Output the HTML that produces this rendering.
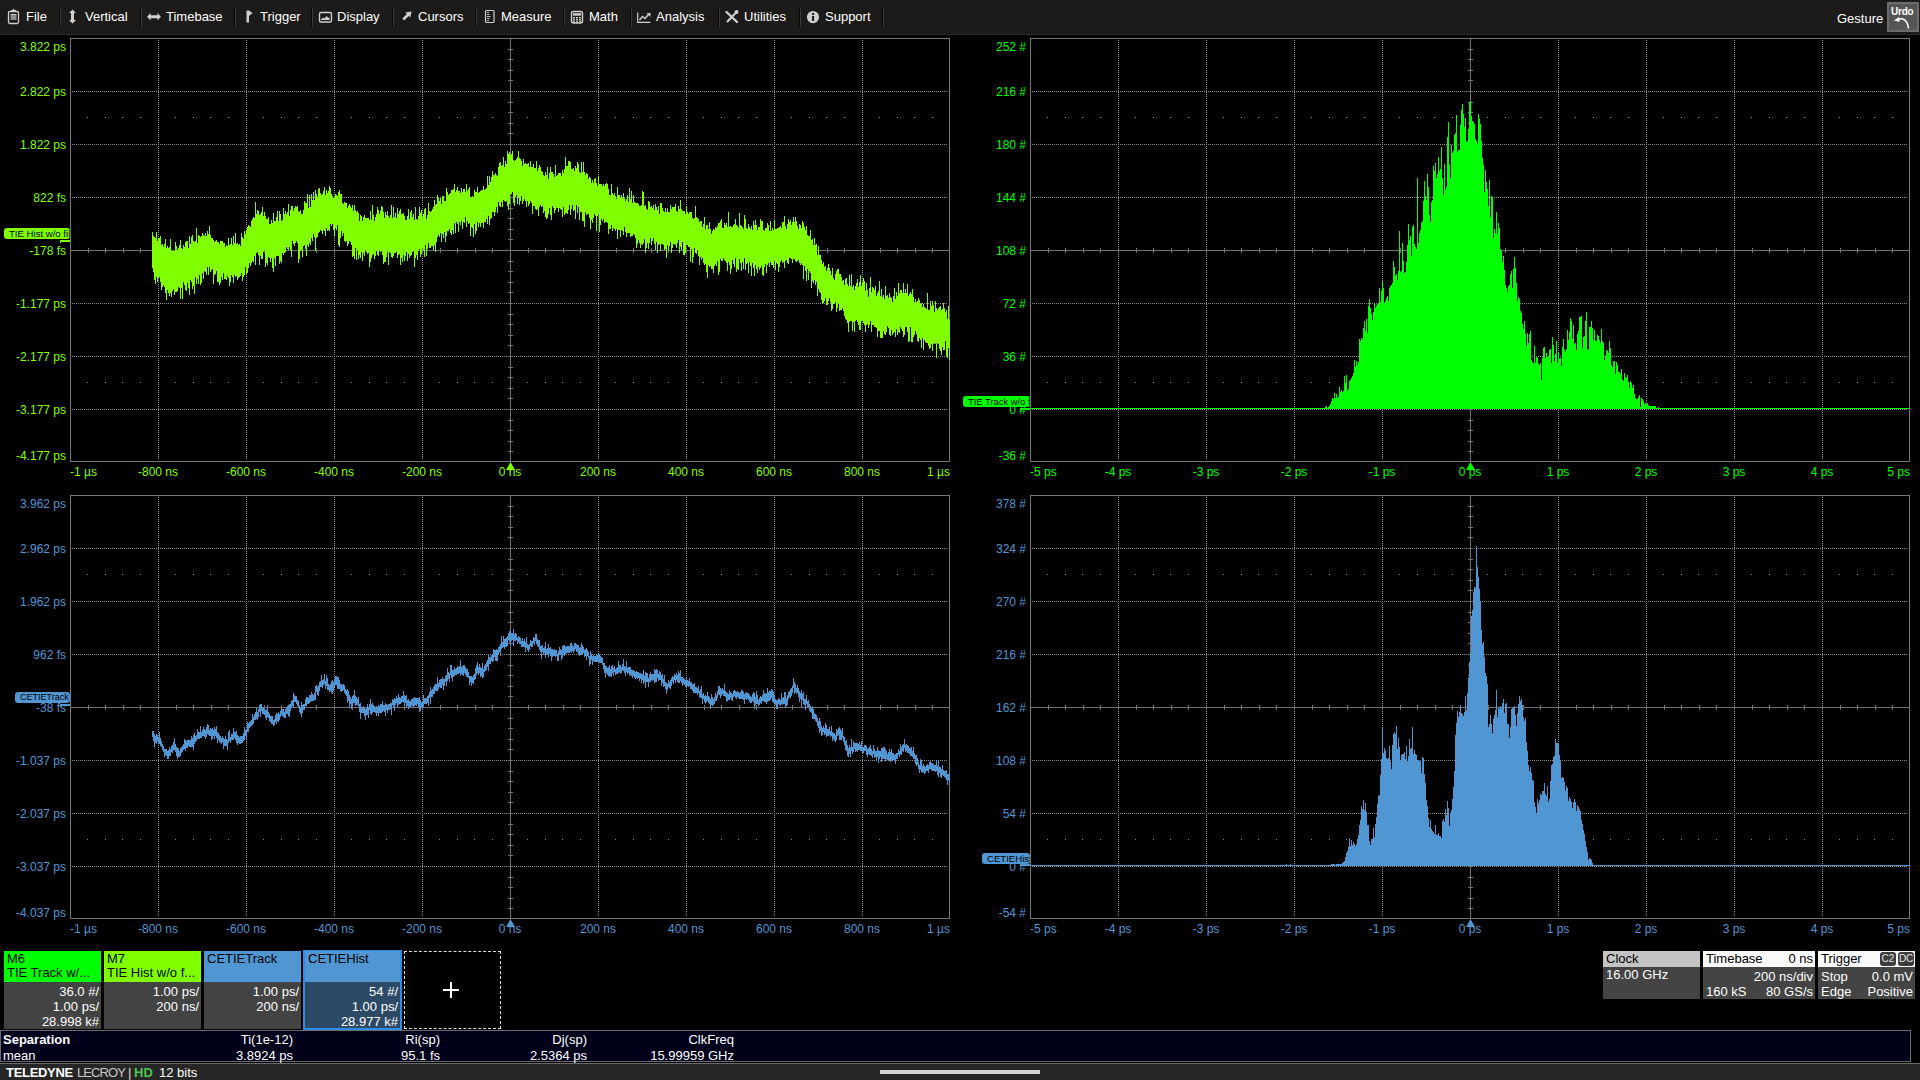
<!DOCTYPE html><html><head><meta charset="utf-8"><style>
*{margin:0;padding:0;box-sizing:border-box}
html,body{width:1920px;height:1080px;overflow:hidden;background:#000;font-family:"Liberation Sans",sans-serif;color:#fff}
.a{position:absolute;white-space:nowrap}
#menu{position:absolute;left:0;top:0;width:1920px;height:35px;background:#1c1b19;border-bottom:1px solid #1c2c3c}
.mi{position:absolute;top:9px;font-size:13px;line-height:15px;color:#fff}
.sep{position:absolute;top:8px;width:2px;height:19px;background:#080808;border-right:1px solid #3a3a3a}
.yl{position:absolute;font-size:12px;line-height:14px;text-align:right;width:70px}
.xl{position:absolute;font-size:12px;line-height:14px;text-align:center;width:80px}
.mk{position:absolute;white-space:nowrap;height:11px;border-radius:3px;color:#000;font-size:9px;line-height:11px;overflow:hidden;text-align:left;padding-left:5px}
.box{position:absolute;font-size:13px;line-height:15px}
.hd{position:absolute;left:0;top:0;right:0;color:#000;padding:1px 0 0 3px;line-height:14px}
.bd{position:absolute;left:0;right:0;bottom:0;background:#434343;text-align:right;padding:2px 2px 0 0}
</style></head><body>
<div id="menu">
<div class="mi" style="left:26px">File</div>
<div class="sep" style="left:59px"></div>
<div class="mi" style="left:85px">Vertical</div>
<div class="sep" style="left:140px"></div>
<div class="mi" style="left:166px">Timebase</div>
<div class="sep" style="left:234px"></div>
<div class="mi" style="left:260px">Trigger</div>
<div class="sep" style="left:311px"></div>
<div class="mi" style="left:337px">Display</div>
<div class="sep" style="left:392px"></div>
<div class="mi" style="left:418px">Cursors</div>
<div class="sep" style="left:475px"></div>
<div class="mi" style="left:501px">Measure</div>
<div class="sep" style="left:563px"></div>
<div class="mi" style="left:589px">Math</div>
<div class="sep" style="left:630px"></div>
<div class="mi" style="left:656px">Analysis</div>
<div class="sep" style="left:718px"></div>
<div class="mi" style="left:744px">Utilities</div>
<div class="sep" style="left:799px"></div>
<div class="mi" style="left:825px">Support</div>
<div class="sep" style="left:882px"></div>
<div class="mi" style="left:1837px;top:11px">Gesture</div>
</div>
<svg class="a" style="left:0;top:0" width="960" height="34"><rect x="8.5" y="11.5" width="10" height="12" rx="1.5" fill="none" stroke="#cfcfcf" stroke-width="1.3"/><rect x="10.5" y="15" width="6" height="5" fill="#8a8a8a"/><rect x="10.5" y="14" width="6" height="1" fill="#cfcfcf"/><path d="M11 12V10h1.5l1-1.5l1 1.5H16v2z" fill="#cfcfcf"/><path d="M72.5 9.5l3.5 3.5h-2v7h2l-3.5 3.5l-3.5-3.5h2v-7h-2z" fill="#cfcfcf"/><path d="M147 16.8l3.6-3.8v2.3h6.8v-2.3l3.6 3.8l-3.6 3.8v-2.3h-6.8v2.3z" fill="#cfcfcf"/><path d="M246.5 10.5h2.5l3.5 2.5l-3.5 3v6.5h-2.5z" fill="#cfcfcf"/><rect x="319.5" y="12.5" width="12" height="9.5" rx="1.5" fill="none" stroke="#cfcfcf" stroke-width="1.4"/><path d="M321 19.5l2-2l1.5 1l2-2.5l2 2l1 -1v3h-8.5z" fill="#cfcfcf"/><path d="M411.5 11.5l-1.2 6l-1.6-1.6l-4.5 4.5l-1.8-1.8l4.5-4.5l-1.6-1.6z" fill="#cfcfcf"/><rect x="485.5" y="10.5" width="8.5" height="12" rx="1" fill="none" stroke="#cfcfcf" stroke-width="1.2"/><path d="M487 12.5h2M487 14.5h2.5M487 16.5h3.5M487 18.5h2.5M487 20.5h2" stroke="#cfcfcf" stroke-width="0.9"/><rect x="571.5" y="11.5" width="11" height="11.5" rx="2" fill="none" stroke="#cfcfcf" stroke-width="1.4"/><rect x="573" y="13.2" width="8" height="2.5" fill="#cfcfcf"/><rect x="573.0" y="17.0" width="2" height="1.4" fill="#cfcfcf"/><rect x="576.0" y="17.0" width="2" height="1.4" fill="#cfcfcf"/><rect x="579.0" y="17.0" width="2" height="1.4" fill="#cfcfcf"/><rect x="573.0" y="19.1" width="2" height="1.4" fill="#cfcfcf"/><rect x="576.0" y="19.1" width="2" height="1.4" fill="#cfcfcf"/><rect x="579.0" y="19.1" width="2" height="1.4" fill="#cfcfcf"/><rect x="573.0" y="21.2" width="2" height="1.4" fill="#cfcfcf"/><rect x="576.0" y="21.2" width="2" height="1.4" fill="#cfcfcf"/><rect x="579.0" y="21.2" width="2" height="1.4" fill="#cfcfcf"/><path d="M637.7 12.5V22.3H650.5" fill="none" stroke="#cfcfcf" stroke-width="1.2"/><path d="M639.5 20l3-3.5l2.5 2l3.5-4" fill="none" stroke="#cfcfcf" stroke-width="1.4"/><path d="M646.5 13h4v4z" fill="#cfcfcf"/><path d="M726.5 12l10.5 10" stroke="#cfcfcf" stroke-width="2.4" stroke-linecap="round"/><path d="M737 11.5l-9.5 10" stroke="#cfcfcf" stroke-width="2" stroke-linecap="round"/><circle cx="736.5" cy="12" r="2" fill="#cfcfcf"/><circle cx="813" cy="17.1" r="6.1" fill="#cfcfcf"/><rect x="812" y="16" width="2.1" height="5" fill="#1b1b1b"/><rect x="812" y="13" width="2.1" height="2" fill="#1b1b1b"/></svg>
<div class="a" style="left:1887px;top:2px;width:32px;height:30px;background:#555;border:2px solid #6c6c6c"></div>
<div class="a" style="left:1891px;top:6px;font-size:10px;line-height:12px;color:#fff;font-weight:bold;letter-spacing:-0.2px">Urdo</div>
<svg class="a" style="left:1887px;top:2px" width="32" height="30"><path d="M10.5 17.5c5-2 10 0 11 9" fill="none" stroke="#fff" stroke-width="1.6"/><path d="M7 18.5l5-3.5l0.5 5z" fill="#fff"/></svg>
<svg class="a" style="left:0;top:0" width="1920" height="1080" shape-rendering="crispEdges">
<path d="M158.5 40V460M246.5 40V460M334.5 40V460M422.5 40V460M598.5 40V460M686.5 40V460M774.5 40V460M862.5 40V460" stroke="#8c8c8c" stroke-width="1" stroke-dasharray="1 1" fill="none"/>
<path d="M72 91.5H948M72 144.5H948M72 197.5H948M72 303.5H948M72 356.5H948M72 409.5H948" stroke="#8c8c8c" stroke-width="1" stroke-dasharray="1 1" fill="none"/>
<path d="M87 117h1v1h-1zM105 117h1v1h-1zM122 117h1v1h-1zM140 117h1v1h-1zM175 117h1v1h-1zM193 117h1v1h-1zM210 117h1v1h-1zM228 117h1v1h-1zM263 117h1v1h-1zM281 117h1v1h-1zM298 117h1v1h-1zM316 117h1v1h-1zM351 117h1v1h-1zM369 117h1v1h-1zM386 117h1v1h-1zM404 117h1v1h-1zM439 117h1v1h-1zM457 117h1v1h-1zM474 117h1v1h-1zM492 117h1v1h-1zM527 117h1v1h-1zM545 117h1v1h-1zM562 117h1v1h-1zM580 117h1v1h-1zM615 117h1v1h-1zM633 117h1v1h-1zM650 117h1v1h-1zM668 117h1v1h-1zM703 117h1v1h-1zM721 117h1v1h-1zM738 117h1v1h-1zM756 117h1v1h-1zM791 117h1v1h-1zM809 117h1v1h-1zM826 117h1v1h-1zM844 117h1v1h-1zM879 117h1v1h-1zM897 117h1v1h-1zM914 117h1v1h-1zM932 117h1v1h-1zM87 382h1v1h-1zM105 382h1v1h-1zM122 382h1v1h-1zM140 382h1v1h-1zM175 382h1v1h-1zM193 382h1v1h-1zM210 382h1v1h-1zM228 382h1v1h-1zM263 382h1v1h-1zM281 382h1v1h-1zM298 382h1v1h-1zM316 382h1v1h-1zM351 382h1v1h-1zM369 382h1v1h-1zM386 382h1v1h-1zM404 382h1v1h-1zM439 382h1v1h-1zM457 382h1v1h-1zM474 382h1v1h-1zM492 382h1v1h-1zM527 382h1v1h-1zM545 382h1v1h-1zM562 382h1v1h-1zM580 382h1v1h-1zM615 382h1v1h-1zM633 382h1v1h-1zM650 382h1v1h-1zM668 382h1v1h-1zM703 382h1v1h-1zM721 382h1v1h-1zM738 382h1v1h-1zM756 382h1v1h-1zM791 382h1v1h-1zM809 382h1v1h-1zM826 382h1v1h-1zM844 382h1v1h-1zM879 382h1v1h-1zM897 382h1v1h-1zM914 382h1v1h-1zM932 382h1v1h-1z" fill="#8c8c8c"/>
<path d="M71 250.5H949M510.5 39V461M88.5 248v5M105.5 248v5M123.5 248v5M140.5 248v5M158.5 248v5M176.5 248v5M193.5 248v5M211.5 248v5M228.5 248v5M246.5 248v5M264.5 248v5M281.5 248v5M299.5 248v5M316.5 248v5M334.5 248v5M352.5 248v5M369.5 248v5M387.5 248v5M404.5 248v5M422.5 248v5M440.5 248v5M457.5 248v5M475.5 248v5M492.5 248v5M510.5 248v5M528.5 248v5M545.5 248v5M563.5 248v5M580.5 248v5M598.5 248v5M616.5 248v5M633.5 248v5M651.5 248v5M668.5 248v5M686.5 248v5M704.5 248v5M721.5 248v5M739.5 248v5M756.5 248v5M774.5 248v5M792.5 248v5M809.5 248v5M827.5 248v5M844.5 248v5M862.5 248v5M880.5 248v5M897.5 248v5M915.5 248v5M932.5 248v5M508 49.5h5M508 59.5h5M508 70.5h5M508 80.5h5M508 91.5h5M508 102.5h5M508 112.5h5M508 123.5h5M508 133.5h5M508 144.5h5M508 155.5h5M508 165.5h5M508 176.5h5M508 186.5h5M508 197.5h5M508 208.5h5M508 218.5h5M508 229.5h5M508 239.5h5M508 250.5h5M508 261.5h5M508 271.5h5M508 282.5h5M508 292.5h5M508 303.5h5M508 314.5h5M508 324.5h5M508 335.5h5M508 345.5h5M508 356.5h5M508 367.5h5M508 377.5h5M508 388.5h5M508 398.5h5M508 409.5h5M508 420.5h5M508 430.5h5M508 441.5h5M508 451.5h5" stroke="#727272" stroke-width="1" fill="none"/>
<rect x="70.5" y="38.5" width="879" height="423" stroke="#767676" stroke-width="1" fill="none"/>
<path d="M1118.5 40V460M1206.5 40V460M1294.5 40V460M1382.5 40V460M1558.5 40V460M1646.5 40V460M1734.5 40V460M1822.5 40V460" stroke="#8c8c8c" stroke-width="1" stroke-dasharray="1 1" fill="none"/>
<path d="M1032 91.5H1908M1032 144.5H1908M1032 197.5H1908M1032 303.5H1908M1032 356.5H1908M1032 409.5H1908" stroke="#8c8c8c" stroke-width="1" stroke-dasharray="1 1" fill="none"/>
<path d="M1047 117h1v1h-1zM1065 117h1v1h-1zM1082 117h1v1h-1zM1100 117h1v1h-1zM1135 117h1v1h-1zM1153 117h1v1h-1zM1170 117h1v1h-1zM1188 117h1v1h-1zM1223 117h1v1h-1zM1241 117h1v1h-1zM1258 117h1v1h-1zM1276 117h1v1h-1zM1311 117h1v1h-1zM1329 117h1v1h-1zM1346 117h1v1h-1zM1364 117h1v1h-1zM1399 117h1v1h-1zM1417 117h1v1h-1zM1434 117h1v1h-1zM1452 117h1v1h-1zM1487 117h1v1h-1zM1505 117h1v1h-1zM1522 117h1v1h-1zM1540 117h1v1h-1zM1575 117h1v1h-1zM1593 117h1v1h-1zM1610 117h1v1h-1zM1628 117h1v1h-1zM1663 117h1v1h-1zM1681 117h1v1h-1zM1698 117h1v1h-1zM1716 117h1v1h-1zM1751 117h1v1h-1zM1769 117h1v1h-1zM1786 117h1v1h-1zM1804 117h1v1h-1zM1839 117h1v1h-1zM1857 117h1v1h-1zM1874 117h1v1h-1zM1892 117h1v1h-1zM1047 382h1v1h-1zM1065 382h1v1h-1zM1082 382h1v1h-1zM1100 382h1v1h-1zM1135 382h1v1h-1zM1153 382h1v1h-1zM1170 382h1v1h-1zM1188 382h1v1h-1zM1223 382h1v1h-1zM1241 382h1v1h-1zM1258 382h1v1h-1zM1276 382h1v1h-1zM1311 382h1v1h-1zM1329 382h1v1h-1zM1346 382h1v1h-1zM1364 382h1v1h-1zM1399 382h1v1h-1zM1417 382h1v1h-1zM1434 382h1v1h-1zM1452 382h1v1h-1zM1487 382h1v1h-1zM1505 382h1v1h-1zM1522 382h1v1h-1zM1540 382h1v1h-1zM1575 382h1v1h-1zM1593 382h1v1h-1zM1610 382h1v1h-1zM1628 382h1v1h-1zM1663 382h1v1h-1zM1681 382h1v1h-1zM1698 382h1v1h-1zM1716 382h1v1h-1zM1751 382h1v1h-1zM1769 382h1v1h-1zM1786 382h1v1h-1zM1804 382h1v1h-1zM1839 382h1v1h-1zM1857 382h1v1h-1zM1874 382h1v1h-1zM1892 382h1v1h-1z" fill="#8c8c8c"/>
<path d="M1031 250.5H1909M1470.5 39V461M1048.5 248v5M1065.5 248v5M1083.5 248v5M1100.5 248v5M1118.5 248v5M1136.5 248v5M1153.5 248v5M1171.5 248v5M1188.5 248v5M1206.5 248v5M1224.5 248v5M1241.5 248v5M1259.5 248v5M1276.5 248v5M1294.5 248v5M1312.5 248v5M1329.5 248v5M1347.5 248v5M1364.5 248v5M1382.5 248v5M1400.5 248v5M1417.5 248v5M1435.5 248v5M1452.5 248v5M1470.5 248v5M1488.5 248v5M1505.5 248v5M1523.5 248v5M1540.5 248v5M1558.5 248v5M1576.5 248v5M1593.5 248v5M1611.5 248v5M1628.5 248v5M1646.5 248v5M1664.5 248v5M1681.5 248v5M1699.5 248v5M1716.5 248v5M1734.5 248v5M1752.5 248v5M1769.5 248v5M1787.5 248v5M1804.5 248v5M1822.5 248v5M1840.5 248v5M1857.5 248v5M1875.5 248v5M1892.5 248v5M1468 49.5h5M1468 59.5h5M1468 70.5h5M1468 80.5h5M1468 91.5h5M1468 102.5h5M1468 112.5h5M1468 123.5h5M1468 133.5h5M1468 144.5h5M1468 155.5h5M1468 165.5h5M1468 176.5h5M1468 186.5h5M1468 197.5h5M1468 208.5h5M1468 218.5h5M1468 229.5h5M1468 239.5h5M1468 250.5h5M1468 261.5h5M1468 271.5h5M1468 282.5h5M1468 292.5h5M1468 303.5h5M1468 314.5h5M1468 324.5h5M1468 335.5h5M1468 345.5h5M1468 356.5h5M1468 367.5h5M1468 377.5h5M1468 388.5h5M1468 398.5h5M1468 409.5h5M1468 420.5h5M1468 430.5h5M1468 441.5h5M1468 451.5h5" stroke="#727272" stroke-width="1" fill="none"/>
<rect x="1030.5" y="38.5" width="879" height="423" stroke="#767676" stroke-width="1" fill="none"/>
<path d="M158.5 497V917M246.5 497V917M334.5 497V917M422.5 497V917M598.5 497V917M686.5 497V917M774.5 497V917M862.5 497V917" stroke="#8c8c8c" stroke-width="1" stroke-dasharray="1 1" fill="none"/>
<path d="M72 548.5H948M72 601.5H948M72 654.5H948M72 760.5H948M72 813.5H948M72 866.5H948" stroke="#8c8c8c" stroke-width="1" stroke-dasharray="1 1" fill="none"/>
<path d="M87 574h1v1h-1zM105 574h1v1h-1zM122 574h1v1h-1zM140 574h1v1h-1zM175 574h1v1h-1zM193 574h1v1h-1zM210 574h1v1h-1zM228 574h1v1h-1zM263 574h1v1h-1zM281 574h1v1h-1zM298 574h1v1h-1zM316 574h1v1h-1zM351 574h1v1h-1zM369 574h1v1h-1zM386 574h1v1h-1zM404 574h1v1h-1zM439 574h1v1h-1zM457 574h1v1h-1zM474 574h1v1h-1zM492 574h1v1h-1zM527 574h1v1h-1zM545 574h1v1h-1zM562 574h1v1h-1zM580 574h1v1h-1zM615 574h1v1h-1zM633 574h1v1h-1zM650 574h1v1h-1zM668 574h1v1h-1zM703 574h1v1h-1zM721 574h1v1h-1zM738 574h1v1h-1zM756 574h1v1h-1zM791 574h1v1h-1zM809 574h1v1h-1zM826 574h1v1h-1zM844 574h1v1h-1zM879 574h1v1h-1zM897 574h1v1h-1zM914 574h1v1h-1zM932 574h1v1h-1zM87 839h1v1h-1zM105 839h1v1h-1zM122 839h1v1h-1zM140 839h1v1h-1zM175 839h1v1h-1zM193 839h1v1h-1zM210 839h1v1h-1zM228 839h1v1h-1zM263 839h1v1h-1zM281 839h1v1h-1zM298 839h1v1h-1zM316 839h1v1h-1zM351 839h1v1h-1zM369 839h1v1h-1zM386 839h1v1h-1zM404 839h1v1h-1zM439 839h1v1h-1zM457 839h1v1h-1zM474 839h1v1h-1zM492 839h1v1h-1zM527 839h1v1h-1zM545 839h1v1h-1zM562 839h1v1h-1zM580 839h1v1h-1zM615 839h1v1h-1zM633 839h1v1h-1zM650 839h1v1h-1zM668 839h1v1h-1zM703 839h1v1h-1zM721 839h1v1h-1zM738 839h1v1h-1zM756 839h1v1h-1zM791 839h1v1h-1zM809 839h1v1h-1zM826 839h1v1h-1zM844 839h1v1h-1zM879 839h1v1h-1zM897 839h1v1h-1zM914 839h1v1h-1zM932 839h1v1h-1z" fill="#8c8c8c"/>
<path d="M71 707.5H949M510.5 496V918M88.5 705v5M105.5 705v5M123.5 705v5M140.5 705v5M158.5 705v5M176.5 705v5M193.5 705v5M211.5 705v5M228.5 705v5M246.5 705v5M264.5 705v5M281.5 705v5M299.5 705v5M316.5 705v5M334.5 705v5M352.5 705v5M369.5 705v5M387.5 705v5M404.5 705v5M422.5 705v5M440.5 705v5M457.5 705v5M475.5 705v5M492.5 705v5M510.5 705v5M528.5 705v5M545.5 705v5M563.5 705v5M580.5 705v5M598.5 705v5M616.5 705v5M633.5 705v5M651.5 705v5M668.5 705v5M686.5 705v5M704.5 705v5M721.5 705v5M739.5 705v5M756.5 705v5M774.5 705v5M792.5 705v5M809.5 705v5M827.5 705v5M844.5 705v5M862.5 705v5M880.5 705v5M897.5 705v5M915.5 705v5M932.5 705v5M508 506.5h5M508 516.5h5M508 527.5h5M508 537.5h5M508 548.5h5M508 559.5h5M508 569.5h5M508 580.5h5M508 590.5h5M508 601.5h5M508 612.5h5M508 622.5h5M508 633.5h5M508 643.5h5M508 654.5h5M508 665.5h5M508 675.5h5M508 686.5h5M508 696.5h5M508 707.5h5M508 718.5h5M508 728.5h5M508 739.5h5M508 749.5h5M508 760.5h5M508 771.5h5M508 781.5h5M508 792.5h5M508 802.5h5M508 813.5h5M508 824.5h5M508 834.5h5M508 845.5h5M508 855.5h5M508 866.5h5M508 877.5h5M508 887.5h5M508 898.5h5M508 908.5h5" stroke="#727272" stroke-width="1" fill="none"/>
<rect x="70.5" y="495.5" width="879" height="423" stroke="#767676" stroke-width="1" fill="none"/>
<path d="M1118.5 497V917M1206.5 497V917M1294.5 497V917M1382.5 497V917M1558.5 497V917M1646.5 497V917M1734.5 497V917M1822.5 497V917" stroke="#8c8c8c" stroke-width="1" stroke-dasharray="1 1" fill="none"/>
<path d="M1032 548.5H1908M1032 601.5H1908M1032 654.5H1908M1032 760.5H1908M1032 813.5H1908M1032 866.5H1908" stroke="#8c8c8c" stroke-width="1" stroke-dasharray="1 1" fill="none"/>
<path d="M1047 574h1v1h-1zM1065 574h1v1h-1zM1082 574h1v1h-1zM1100 574h1v1h-1zM1135 574h1v1h-1zM1153 574h1v1h-1zM1170 574h1v1h-1zM1188 574h1v1h-1zM1223 574h1v1h-1zM1241 574h1v1h-1zM1258 574h1v1h-1zM1276 574h1v1h-1zM1311 574h1v1h-1zM1329 574h1v1h-1zM1346 574h1v1h-1zM1364 574h1v1h-1zM1399 574h1v1h-1zM1417 574h1v1h-1zM1434 574h1v1h-1zM1452 574h1v1h-1zM1487 574h1v1h-1zM1505 574h1v1h-1zM1522 574h1v1h-1zM1540 574h1v1h-1zM1575 574h1v1h-1zM1593 574h1v1h-1zM1610 574h1v1h-1zM1628 574h1v1h-1zM1663 574h1v1h-1zM1681 574h1v1h-1zM1698 574h1v1h-1zM1716 574h1v1h-1zM1751 574h1v1h-1zM1769 574h1v1h-1zM1786 574h1v1h-1zM1804 574h1v1h-1zM1839 574h1v1h-1zM1857 574h1v1h-1zM1874 574h1v1h-1zM1892 574h1v1h-1zM1047 839h1v1h-1zM1065 839h1v1h-1zM1082 839h1v1h-1zM1100 839h1v1h-1zM1135 839h1v1h-1zM1153 839h1v1h-1zM1170 839h1v1h-1zM1188 839h1v1h-1zM1223 839h1v1h-1zM1241 839h1v1h-1zM1258 839h1v1h-1zM1276 839h1v1h-1zM1311 839h1v1h-1zM1329 839h1v1h-1zM1346 839h1v1h-1zM1364 839h1v1h-1zM1399 839h1v1h-1zM1417 839h1v1h-1zM1434 839h1v1h-1zM1452 839h1v1h-1zM1487 839h1v1h-1zM1505 839h1v1h-1zM1522 839h1v1h-1zM1540 839h1v1h-1zM1575 839h1v1h-1zM1593 839h1v1h-1zM1610 839h1v1h-1zM1628 839h1v1h-1zM1663 839h1v1h-1zM1681 839h1v1h-1zM1698 839h1v1h-1zM1716 839h1v1h-1zM1751 839h1v1h-1zM1769 839h1v1h-1zM1786 839h1v1h-1zM1804 839h1v1h-1zM1839 839h1v1h-1zM1857 839h1v1h-1zM1874 839h1v1h-1zM1892 839h1v1h-1z" fill="#8c8c8c"/>
<path d="M1031 707.5H1909M1470.5 496V918M1048.5 705v5M1065.5 705v5M1083.5 705v5M1100.5 705v5M1118.5 705v5M1136.5 705v5M1153.5 705v5M1171.5 705v5M1188.5 705v5M1206.5 705v5M1224.5 705v5M1241.5 705v5M1259.5 705v5M1276.5 705v5M1294.5 705v5M1312.5 705v5M1329.5 705v5M1347.5 705v5M1364.5 705v5M1382.5 705v5M1400.5 705v5M1417.5 705v5M1435.5 705v5M1452.5 705v5M1470.5 705v5M1488.5 705v5M1505.5 705v5M1523.5 705v5M1540.5 705v5M1558.5 705v5M1576.5 705v5M1593.5 705v5M1611.5 705v5M1628.5 705v5M1646.5 705v5M1664.5 705v5M1681.5 705v5M1699.5 705v5M1716.5 705v5M1734.5 705v5M1752.5 705v5M1769.5 705v5M1787.5 705v5M1804.5 705v5M1822.5 705v5M1840.5 705v5M1857.5 705v5M1875.5 705v5M1892.5 705v5M1468 506.5h5M1468 516.5h5M1468 527.5h5M1468 537.5h5M1468 548.5h5M1468 559.5h5M1468 569.5h5M1468 580.5h5M1468 590.5h5M1468 601.5h5M1468 612.5h5M1468 622.5h5M1468 633.5h5M1468 643.5h5M1468 654.5h5M1468 665.5h5M1468 675.5h5M1468 686.5h5M1468 696.5h5M1468 707.5h5M1468 718.5h5M1468 728.5h5M1468 739.5h5M1468 749.5h5M1468 760.5h5M1468 771.5h5M1468 781.5h5M1468 792.5h5M1468 802.5h5M1468 813.5h5M1468 824.5h5M1468 834.5h5M1468 845.5h5M1468 855.5h5M1468 866.5h5M1468 877.5h5M1468 887.5h5M1468 898.5h5M1468 908.5h5" stroke="#727272" stroke-width="1" fill="none"/>
<rect x="1030.5" y="495.5" width="879" height="423" stroke="#767676" stroke-width="1" fill="none"/>
<path d="M152 232V268M153 236V272M154 237V280M155 238V284M156 232V277M157 241V282M158 238V278M159 238V277M160 236V282M161 245V290M162 244V287M163 247V285M164 244V287M165 239V293M166 248V300M167 246V290M168 248V293M169 247V296M170 239V293M171 251V297M172 251V291M173 251V289M174 251V295M175 242V292M176 246V292M177 250V291M178 248V287M179 245V288M180 240V299M181 248V288M182 249V299M183 245V282M184 247V285M185 242V290M186 241V291M187 241V283M188 248V288M189 236V295M190 244V280M191 237V282M192 235V289M193 241V286M194 242V294M195 241V277M196 228V284M197 243V279M198 235V284M199 236V275M200 237V285M201 236V283M202 233V273M203 235V279M204 236V271M205 233V272M206 236V275M207 231V267M208 234V275M209 226V267M210 235V272M211 238V270M212 238V269M213 240V284M214 242V275M215 241V274M216 240V271M217 242V282M218 242V282M219 244V285M220 241V283M221 241V277M222 241V280M223 243V273M224 243V279M225 247V279M226 245V280M227 246V276M228 238V278M229 245V286M230 244V282M231 238V275M232 245V277M233 236V283M234 243V275M235 233V277M236 244V276M237 243V280M238 245V278M239 244V277M240 246V276M241 233V273M242 237V281M243 239V277M244 231V275M245 234V267M246 230V274M247 227V273M248 225V268M249 226V263M250 227V266M251 221V263M252 219V261M253 217V262M254 218V256M255 202V265M256 214V253M257 210V252M258 211V255M259 215V265M260 214V256M261 212V259M262 207V259M263 216V252M264 212V250M265 216V267M266 219V263M267 219V265M268 217V257M269 224V258M270 224V262M271 220V258M272 223V268M273 213V272M274 221V258M275 221V266M276 217V256M277 211V256M278 221V256M279 211V264M280 214V261M281 221V263M282 220V253M283 208V255M284 214V253M285 211V252M286 214V247M287 212V249M288 204V250M289 216V247M290 210V250M291 206V257M292 206V241M293 211V244M294 208V246M295 206V243M296 207V241M297 206V243M298 211V263M299 212V259M300 210V251M301 214V250M302 214V257M303 210V246M304 201V245M305 203V249M306 203V256M307 194V245M308 208V247M309 195V243M310 207V245M311 194V238M312 200V241M313 192V234M314 200V237M315 190V251M316 194V238M317 197V237M318 189V233M319 188V232M320 193V230M321 195V231M322 194V234M323 191V230M324 187V231M325 195V236M326 190V228M327 193V231M328 191V230M329 186V231M330 188V224M331 194V226M332 196V224M333 198V230M334 198V236M335 194V228M336 195V230M337 196V225M338 192V245M339 190V247M340 194V238M341 194V231M342 203V236M343 204V233M344 202V241M345 203V242M346 203V241M347 208V246M348 206V244M349 204V241M350 206V242M351 208V245M352 205V257M353 211V256M354 205V259M355 210V248M356 212V260M357 211V250M358 213V259M359 221V255M360 215V258M361 216V252M362 221V261M363 217V253M364 215V256M365 218V250M366 218V252M367 218V254M368 218V253M369 220V267M370 211V262M371 220V258M372 205V255M373 215V254M374 221V259M375 217V256M376 214V251M377 207V255M378 210V256M379 214V250M380 211V252M381 206V251M382 207V255M383 212V264M384 218V262M385 212V262M386 215V257M387 211V251M388 216V265M389 218V252M390 215V253M391 205V257M392 218V258M393 207V256M394 217V253M395 213V253M396 218V252M397 208V258M398 214V255M399 211V254M400 209V265M401 214V258M402 214V262M403 213V255M404 216V261M405 220V256M406 220V252M407 216V261M408 209V254M409 219V258M410 212V256M411 210V255M412 217V252M413 214V251M414 220V267M415 207V258M416 219V255M417 220V260M418 216V251M419 207V249M420 213V257M421 210V254M422 217V248M423 214V251M424 209V257M425 208V245M426 219V256M427 215V249M428 203V243M429 211V248M430 212V248M431 211V246M432 209V246M433 207V250M434 200V245M435 205V252M436 204V242M437 195V237M438 198V235M439 201V237M440 198V233M441 204V242M442 196V234M443 196V238M444 201V232M445 201V242M446 188V236M447 192V231M448 195V231M449 194V229M450 193V233M451 190V235M452 190V230M453 189V234M454 184V223M455 192V233M456 190V222M457 187V224M458 191V232M459 191V222M460 193V225M461 188V221M462 192V229M463 189V222M464 189V223M465 192V217M466 184V227M467 191V221M468 189V224M469 187V223M470 197V236M471 197V227M472 196V228M473 197V237M474 190V224M475 192V234M476 192V231M477 187V222M478 193V227M479 192V223M480 191V227M481 190V223M482 190V223M483 186V228M484 190V222M485 189V222M486 188V219M487 176V224M488 185V216M489 176V225M490 182V219M491 177V218M492 171V212M493 175V212M494 175V216M495 173V212M496 175V207M497 176V213M498 167V202M499 163V206M500 162V207M501 166V202M502 165V207M503 157V200M504 167V201M505 161V202M506 164V201M507 151V206M508 154V210M509 152V204M510 155V194M511 154V194M512 151V192M513 160V203M514 161V206M515 160V197M516 159V195M517 157V204M518 151V197M519 158V205M520 159V201M521 161V196M522 166V204M523 159V201M524 164V199M525 163V201M526 164V207M527 164V201M528 163V206M529 167V204M530 161V201M531 167V203M532 167V214M533 164V206M534 168V206M535 168V209M536 161V210M537 171V209M538 168V216M539 165V207M540 167V205M541 171V207M542 172V206M543 175V213M544 176V211M545 172V217M546 175V219M547 167V218M548 179V214M549 173V208M550 167V215M551 172V220M552 172V206M553 174V208M554 177V213M555 165V210M556 176V208M557 175V208M558 173V212M559 173V208M560 173V209M561 176V210M562 170V217M563 173V207M564 169V215M565 157V213M566 166V213M567 166V214M568 161V210M569 161V205M570 162V215M571 169V209M572 169V205M573 168V211M574 171V210M575 166V219M576 168V205M577 162V213M578 164V207M579 172V220M580 173V212M581 162V212M582 172V221M583 162V221M584 172V227M585 175V212M586 173V215M587 174V214M588 179V214M589 177V218M590 178V229M591 183V220M592 180V223M593 183V218M594 179V214M595 178V216M596 183V231M597 186V216M598 176V214M599 184V232M600 184V225M601 184V219M602 186V221M603 184V219M604 186V223M605 184V222M606 183V222M607 184V223M608 189V234M609 195V229M610 195V229M611 184V225M612 193V231M613 195V228M614 193V229M615 196V231M616 199V229M617 187V239M618 195V230M619 195V230M620 198V237M621 195V230M622 198V231M623 193V235M624 198V227M625 201V232M626 199V237M627 195V233M628 202V233M629 188V233M630 199V237M631 191V236M632 203V236M633 195V234M634 202V235M635 203V238M636 203V248M637 203V244M638 204V240M639 206V243M640 206V248M641 205V244M642 191V245M643 192V243M644 206V239M645 205V253M646 209V248M647 210V243M648 201V249M649 202V243M650 207V238M651 206V245M652 208V241M653 205V238M654 210V244M655 204V250M656 207V242M657 210V253M658 206V245M659 214V244M660 203V251M661 203V244M662 208V244M663 211V245M664 212V250M665 208V249M666 212V258M667 208V245M668 212V250M669 212V246M670 205V242M671 209V253M672 207V248M673 207V244M674 207V244M675 204V245M676 211V248M677 212V243M678 206V240M679 209V253M680 200V247M681 209V250M682 211V242M683 211V255M684 211V255M685 214V253M686 206V245M687 212V245M688 214V247M689 212V247M690 212V262M691 212V249M692 218V263M693 219V257M694 218V248M695 206V253M696 217V254M697 218V250M698 219V256M699 222V265M700 221V257M701 221V260M702 227V258M703 224V263M704 217V265M705 229V264M706 225V272M707 225V278M708 229V265M709 222V267M710 229V266M711 234V269M712 231V269M713 229V273M714 230V266M715 227V264M716 228V266M717 226V261M718 223V275M719 223V272M720 221V259M721 219V261M722 228V261M723 228V258M724 223V260M725 225V261M726 223V263M727 227V271M728 212V262M729 227V265M730 226V274M731 227V269M732 227V260M733 225V264M734 224V267M735 219V258M736 225V272M737 226V269M738 228V270M739 213V259M740 225V263M741 226V271M742 227V262M743 229V269M744 215V258M745 219V270M746 228V264M747 229V263M748 224V273M749 227V262M750 229V266M751 226V276M752 230V263M753 221V268M754 225V276M755 220V265M756 225V269M757 230V273M758 227V267M759 227V270M760 219V268M761 221V266M762 221V275M763 230V276M764 231V267M765 228V264M766 228V273M767 223V265M768 225V263M769 231V267M770 221V262M771 231V265M772 228V265M773 230V268M774 220V261M775 229V270M776 229V263M777 228V264M778 228V272M779 227V267M780 226V262M781 228V260M782 222V263M783 222V262M784 216V268M785 226V261M786 229V260M787 224V263M788 219V264M789 222V258M790 220V258M791 225V259M792 222V263M793 217V259M794 222V259M795 217V261M796 221V262M797 226V261M798 229V260M799 224V263M800 225V265M801 228V263M802 221V265M803 223V279M804 227V266M805 230V271M806 226V281M807 235V269M808 236V280M809 236V271M810 230V273M811 240V288M812 239V281M813 245V283M814 238V280M815 245V285M816 244V282M817 255V296M818 246V289M819 255V292M820 255V293M821 260V300M822 264V304M823 262V303M824 267V301M825 266V298M826 271V305M827 268V305M828 264V301M829 268V298M830 271V302M831 275V311M832 268V309M833 278V304M834 280V304M835 274V302M836 271V312M837 269V308M838 269V303M839 274V311M840 274V310M841 277V310M842 281V308M843 280V311M844 285V316M845 279V319M846 278V320M847 284V323M848 286V332M849 275V322M850 286V321M851 274V321M852 287V331M853 285V322M854 290V332M855 286V321M856 283V320M857 279V322M858 287V325M859 282V330M860 275V330M861 286V321M862 283V321M863 278V323M864 281V325M865 291V332M866 283V325M867 290V324M868 297V328M869 288V325M870 277V321M871 292V332M872 287V325M873 288V325M874 290V327M875 286V327M876 296V328M877 293V337M878 291V331M879 281V331M880 296V338M881 289V338M882 297V338M883 295V331M884 299V334M885 286V335M886 296V332M887 295V326M888 298V328M889 293V335M890 297V336M891 298V330M892 302V335M893 296V333M894 288V332M895 299V337M896 292V329M897 296V335M898 283V332M899 293V333M900 290V327M901 290V329M902 293V331M903 283V337M904 293V335M905 289V327M906 293V327M907 284V332M908 296V342M909 294V341M910 292V327M911 294V342M912 289V342M913 297V337M914 302V335M915 299V331M916 302V334M917 301V341M918 298V342M919 300V338M920 304V340M921 303V348M922 307V338M923 304V350M924 307V340M925 308V342M926 309V343M927 293V343M928 310V346M929 310V349M930 301V348M931 306V344M932 301V351M933 305V344M934 312V343M935 301V344M936 308V358M937 310V343M938 308V344M939 307V349M940 306V351M941 310V355M942 309V347M943 303V350M944 308V350M945 312V341M946 310V356M947 319V358M948 306V348M949 320V360" stroke="#80ff00" stroke-width="1" fill="none" transform="translate(0.5 0)"/>
<path d="M152 731V737M153 731V741M154 734V747M155 736V743M156 734V744M157 735V741M158 738V744M159 732V744M160 738V746M161 741V747M162 744V750M163 746V752M164 749V757M165 749V755M166 749V756M167 751V759M168 750V759M169 747V756M170 749V756M171 746V752M172 745V753M173 742V750M174 738V750M175 744V752M176 747V756M177 748V759M178 748V757M179 751V757M180 748V756M181 747V753M182 746V752M183 744V750M184 739V749M185 740V751M186 741V748M187 740V748M188 740V746M189 740V747M190 740V747M191 736V747M192 738V747M193 735V750M194 733V744M195 736V742M196 735V741M197 729V739M198 732V739M199 732V739M200 726V738M201 732V738M202 730V736M203 727V736M204 729V737M205 730V739M206 727V737M207 724V734M208 725V735M209 730V736M210 728V736M211 729V740M212 728V739M213 730V736M214 727V739M215 729V736M216 726V738M217 732V743M218 733V740M219 735V742M220 736V743M221 738V744M222 736V742M223 738V749M224 739V746M225 736V746M226 739V746M227 740V750M228 732V743M229 730V741M230 737V743M231 734V740M232 734V740M233 728V740M234 732V738M235 732V740M236 731V743M237 735V745M238 736V743M239 737V744M240 736V744M241 736V743M242 736V743M243 733V741M244 727V740M245 730V736M246 729V740M247 722V732M248 723V732M249 722V728M250 721V727M251 720V726M252 714V725M253 717V724M254 714V720M255 712V720M256 708V719M257 712V720M258 709V717M259 705V712M260 704V717M261 704V711M262 707V714M263 708V714M264 709V715M265 710V718M266 710V720M267 705V717M268 712V718M269 714V721M270 716V722M271 716V724M272 716V724M273 720V726M274 719V725M275 715V722M276 713V724M277 714V721M278 712V722M279 714V720M280 711V717M281 709V715M282 709V716M283 709V717M284 712V718M285 709V718M286 708V714M287 706V714M288 705V716M289 704V717M290 704V711M291 701V708M292 700V706M293 693V708M294 695V702M295 696V702M296 696V704M297 700V706M298 701V708M299 706V712M300 707V714M301 702V717M302 705V713M303 704V710M304 704V710M305 699V706M306 697V706M307 697V704M308 698V704M309 695V703M310 695V702M311 692V701M312 694V701M313 695V701M314 693V700M315 686V700M316 685V692M317 687V695M318 685V696M319 682V691M320 681V687M321 675V687M322 680V688M323 679V685M324 674V684M325 681V689M326 675V686M327 678V690M328 684V690M329 685V692M330 684V691M331 681V693M332 680V694M333 682V691M334 679V687M335 676V685M336 676V685M337 677V689M338 677V689M339 680V689M340 684V691M341 684V692M342 685V691M343 684V690M344 685V693M345 689V695M346 690V696M347 689V703M348 691V701M349 695V707M350 697V704M351 699V709M352 696V706M353 695V703M354 690V703M355 696V706M356 697V705M357 699V705M358 697V706M359 704V712M360 703V719M361 707V713M362 707V713M363 706V713M364 708V716M365 709V720M366 707V715M367 704V715M368 707V718M369 704V710M370 699V714M371 704V715M372 703V713M373 705V712M374 706V712M375 707V713M376 706V716M377 707V713M378 705V716M379 706V713M380 704V713M381 704V713M382 701V712M383 705V711M384 705V712M385 703V716M386 704V710M387 706V713M388 704V710M389 704V710M390 703V709M391 703V715M392 699V705M393 700V707M394 698V711M395 699V705M396 696V703M397 698V707M398 694V705M399 697V704M400 698V704M401 696V703M402 696V702M403 691V702M404 695V706M405 696V703M406 695V707M407 700V706M408 699V709M409 701V707M410 701V708M411 699V706M412 699V706M413 698V708M414 697V706M415 698V705M416 698V706M417 698V704M418 698V708M419 697V712M420 700V711M421 702V708M422 702V708M423 695V707M424 698V704M425 698V704M426 698V704M427 696V703M428 695V706M429 692V698M430 687V704M431 690V697M432 689V697M433 687V694M434 685V694M435 684V691M436 684V691M437 677V691M438 683V689M439 680V687M440 679V688M441 679V688M442 677V685M443 679V690M444 679V686M445 676V682M446 675V686M447 668V681M448 672V679M449 673V682M450 665V675M451 665V678M452 670V681M453 670V677M454 667V676M455 669V675M456 668V675M457 666V674M458 667V674M459 666V673M460 660V676M461 667V674M462 666V675M463 665V676M464 665V673M465 667V675M466 669V677M467 669V677M468 672V678M469 676V685M470 676V682M471 676V686M472 677V683M473 675V684M474 674V680M475 668V679M476 665V675M477 662V673M478 667V675M479 664V673M480 667V677M481 668V676M482 663V678M483 669V677M484 666V672M485 664V671M486 662V670M487 660V667M488 654V671M489 657V664M490 657V664M491 655V661M492 654V662M493 649V661M494 650V657M495 650V661M496 649V661M497 650V661M498 647V654M499 646V652M500 644V656M501 636V649M502 642V648M503 636V647M504 639V649M505 638V647M506 638V647M507 636V646M508 634V640M509 631V642M510 631V645M511 633V641M512 633V640M513 629V646M514 634V641M515 633V641M516 634V640M517 638V644M518 636V642M519 637V644M520 638V644M521 641V647M522 638V647M523 641V647M524 639V647M525 642V652M526 637V648M527 644V650M528 645V652M529 644V650M530 640V646M531 641V647M532 641V647M533 637V643M534 638V645M535 634V641M536 634V644M537 639V646M538 640V647M539 640V650M540 646V652M541 646V659M542 645V652M543 648V655M544 647V653M545 642V658M546 649V655M547 648V655M548 644V657M549 648V654M550 647V656M551 649V661M552 649V657M553 650V656M554 649V656M555 650V657M556 650V656M557 654V661M558 651V661M559 647V655M560 649V655M561 650V660M562 646V658M563 645V655M564 645V656M565 647V654M566 646V653M567 646V653M568 646V653M569 646V653M570 643V652M571 643V652M572 645V651M573 647V653M574 643V651M575 643V649M576 644V652M577 645V652M578 645V654M579 648V656M580 647V654M581 643V655M582 645V654M583 647V653M584 650V657M585 649V656M586 648V660M587 650V656M588 652V658M589 656V666M590 651V664M591 654V660M592 656V665M593 655V661M594 656V662M595 656V662M596 654V662M597 655V662M598 654V661M599 654V663M600 656V663M601 657V663M602 658V665M603 663V669M604 663V673M605 666V678M606 666V673M607 668V675M608 667V676M609 665V677M610 669V676M611 666V677M612 665V673M613 668V676M614 666V672M615 669V675M616 668V674M617 667V674M618 661V673M619 665V672M620 665V674M621 667V673M622 664V670M623 659V671M624 666V673M625 667V676M626 661V672M627 668V674M628 667V673M629 667V676M630 667V675M631 670V676M632 670V678M633 670V676M634 671V678M635 672V679M636 671V678M637 672V679M638 672V678M639 673V681M640 673V679M641 674V683M642 674V680M643 670V684M644 676V682M645 672V688M646 673V682M647 673V682M648 678V687M649 674V682M650 672V682M651 674V680M652 674V681M653 674V680M654 669V683M655 670V682M656 669V682M657 670V678M658 674V681M659 671V680M660 672V680M661 675V686M662 674V683M663 679V687M664 675V686M665 682V689M666 683V694M667 684V690M668 680V687M669 682V688M670 680V689M671 678V686M672 676V682M673 677V684M674 674V680M675 675V683M676 673V680M677 675V682M678 671V683M679 673V683M680 670V681M681 677V683M682 677V686M683 678V684M684 679V685M685 680V687M686 678V688M687 680V686M688 681V687M689 678V686M690 682V689M691 682V689M692 684V691M693 684V693M694 683V693M695 687V693M696 687V693M697 688V695M698 686V693M699 691V697M700 689V698M701 686V698M702 694V704M703 693V699M704 696V702M705 695V704M706 696V702M707 692V701M708 696V703M709 697V704M710 699V709M711 694V705M712 697V706M713 699V705M714 697V704M715 693V701M716 695V701M717 691V698M718 686V695M719 686V695M720 688V698M721 689V696M722 688V694M723 690V696M724 684V696M725 691V697M726 692V702M727 693V701M728 694V700M729 690V700M730 692V698M731 693V700M732 694V701M733 691V697M734 690V696M735 691V698M736 692V699M737 691V697M738 692V698M739 693V699M740 692V699M741 690V699M742 690V699M743 692V700M744 694V704M745 693V699M746 692V700M747 693V699M748 693V700M749 695V702M750 696V703M751 697V703M752 694V701M753 692V702M754 693V709M755 697V705M756 691V704M757 695V704M758 700V706M759 698V705M760 696V703M761 697V704M762 695V701M763 690V701M764 693V702M765 694V702M766 693V704M767 688V702M768 692V701M769 691V701M770 691V700M771 689V698M772 690V702M773 692V703M774 696V703M775 699V705M776 700V709M777 700V709M778 698V704M779 699V705M780 700V706M781 693V704M782 698V705M783 697V704M784 692V704M785 692V708M786 698V706M787 695V705M788 692V699M789 691V697M790 689V698M791 688V696M792 686V693M793 678V688M794 682V694M795 684V692M796 688V694M797 685V693M798 688V697M799 691V702M800 693V699M801 690V707M802 694V700M803 692V704M804 699V705M805 699V710M806 695V704M807 701V707M808 700V707M809 704V711M810 706V712M811 707V713M812 706V719M813 709V719M814 713V719M815 714V721M816 715V722M817 718V726M818 721V728M819 718V733M820 721V731M821 726V736M822 728V735M823 726V732M824 728V735M825 723V734M826 725V737M827 729V736M828 729V736M829 727V735M830 731V737M831 726V736M832 732V741M833 733V739M834 733V741M835 735V742M836 729V740M837 730V736M838 728V735M839 727V740M840 729V740M841 731V740M842 728V738M843 736V742M844 737V745M845 741V750M846 740V751M847 745V756M848 748V757M849 745V754M850 747V757M851 739V751M852 747V754M853 741V752M854 743V749M855 743V752M856 743V751M857 743V752M858 744V750M859 742V750M860 745V751M861 741V751M862 747V754M863 747V753M864 745V751M865 745V751M866 746V755M867 749V757M868 748V754M869 747V755M870 745V755M871 749V756M872 751V758M873 745V754M874 749V758M875 751V757M876 751V761M877 747V757M878 750V763M879 751V759M880 751V757M881 748V762M882 748V759M883 747V759M884 747V759M885 749V761M886 751V759M887 754V760M888 752V760M889 749V761M890 752V762M891 749V761M892 753V760M893 753V760M894 755V761M895 754V764M896 753V759M897 753V759M898 749V755M899 751V757M900 744V754M901 747V755M902 745V751M903 744V752M904 739V748M905 745V752M906 744V751M907 745V753M908 746V753M909 748V754M910 748V756M911 747V756M912 751V757M913 747V759M914 753V759M915 755V764M916 755V766M917 758V765M918 762V769M919 765V773M920 759V770M921 760V772M922 766V773M923 764V772M924 766V774M925 767V773M926 765V771M927 764V771M928 765V773M929 762V769M930 761V769M931 763V770M932 763V771M933 764V771M934 765V771M935 765V772M936 760V771M937 766V775M938 761V777M939 767V773M940 767V777M941 769V778M942 765V775M943 770V776M944 771V777M945 771V778M946 770V780M947 774V785M948 774V780M949 773V783" stroke="#5096d3" stroke-width="1" fill="none" transform="translate(0.5 0)"/>
<path d="M1031 408.5H1910" stroke="#00ff00" stroke-width="1"/>
<path d="M1325 407V409M1326 406V409M1327 408V409M1328 407V409M1329 406V409M1330 404V409M1331 401V409M1332 398V409M1333 399V409M1334 393V409M1335 398V409M1336 394V409M1337 398V409M1338 397V409M1339 387V409M1340 392V409M1341 390V409M1342 392V409M1343 391V409M1344 376V409M1345 383V409M1346 375V409M1347 391V409M1348 389V409M1349 381V409M1350 380V409M1351 378V409M1352 376V409M1353 373V409M1354 360V409M1355 367V409M1356 361V409M1357 365V409M1358 362V409M1359 339V409M1360 341V409M1361 338V409M1362 339V409M1363 328V409M1364 321V409M1365 331V409M1366 319V409M1367 333V409M1368 306V409M1369 299V409M1370 308V409M1371 314V409M1372 320V409M1373 312V409M1374 304V409M1375 308V409M1376 306V409M1377 304V409M1378 303V409M1379 288V409M1380 302V409M1381 291V409M1382 281V409M1383 288V409M1384 303V409M1385 301V409M1386 298V409M1387 296V409M1388 301V409M1389 288V409M1390 286V409M1391 285V409M1392 283V409M1393 261V409M1394 267V409M1395 276V409M1396 274V409M1397 280V409M1398 271V409M1399 231V409M1400 272V409M1401 271V409M1402 243V409M1403 261V409M1404 273V409M1405 272V409M1406 262V409M1407 245V409M1408 224V409M1409 240V409M1410 236V409M1411 256V409M1412 227V409M1413 225V409M1414 244V409M1415 247V409M1416 249V409M1417 178V409M1418 243V409M1419 233V409M1420 230V409M1421 223V409M1422 221V409M1423 201V409M1424 181V409M1425 196V409M1426 200V409M1427 174V409M1428 187V409M1429 215V409M1430 222V409M1431 202V409M1432 200V409M1433 166V409M1434 171V409M1435 163V409M1436 178V409M1437 174V409M1438 157V409M1439 171V409M1440 169V409M1441 147V409M1442 178V409M1443 195V409M1444 164V409M1445 190V409M1446 187V409M1447 137V409M1448 122V409M1449 165V409M1450 178V409M1451 145V409M1452 153V409M1453 151V409M1454 135V409M1455 133V409M1456 115V409M1457 152V409M1458 150V409M1459 150V409M1460 125V409M1461 110V409M1462 104V409M1463 114V409M1464 127V409M1465 118V409M1466 142V409M1467 141V409M1468 129V409M1469 102V409M1470 101V409M1471 116V409M1472 121V409M1473 122V409M1474 124V409M1475 139V409M1476 141V409M1477 144V409M1478 114V409M1479 119V409M1480 124V409M1481 141V409M1482 158V409M1483 165V409M1484 192V409M1485 170V409M1486 182V409M1487 189V409M1488 206V409M1489 180V409M1490 217V409M1491 196V409M1492 197V409M1493 238V409M1494 229V409M1495 233V409M1496 212V409M1497 234V409M1498 223V409M1499 228V409M1500 249V409M1501 251V409M1502 262V409M1503 256V409M1504 270V409M1505 285V409M1506 288V409M1507 292V409M1508 286V409M1509 285V409M1510 274V409M1511 271V409M1512 288V409M1513 269V409M1514 257V409M1515 268V409M1516 283V409M1517 301V409M1518 297V409M1519 299V409M1520 311V409M1521 313V409M1522 324V409M1523 329V409M1524 321V409M1525 334V409M1526 346V409M1527 333V409M1528 343V409M1529 334V409M1530 331V409M1531 360V409M1532 362V409M1533 364V409M1534 346V409M1535 363V409M1536 357V409M1537 358V409M1538 364V409M1539 365V409M1540 363V409M1541 380V409M1542 358V409M1543 348V409M1544 347V409M1545 358V409M1546 353V409M1547 357V409M1548 356V409M1549 350V409M1550 349V409M1551 363V409M1552 337V409M1553 345V409M1554 361V409M1555 354V409M1556 341V409M1557 363V409M1558 353V409M1559 359V409M1560 358V409M1561 366V409M1562 347V409M1563 339V409M1564 350V409M1565 352V409M1566 349V409M1567 330V409M1568 340V409M1569 332V409M1570 318V409M1571 321V409M1572 339V409M1573 325V409M1574 344V409M1575 343V409M1576 350V409M1577 334V409M1578 331V409M1579 317V409M1580 317V409M1581 316V409M1582 348V409M1583 337V409M1584 336V409M1585 321V409M1586 312V409M1587 349V409M1588 350V409M1589 327V409M1590 327V409M1591 321V409M1592 328V409M1593 340V409M1594 330V409M1595 341V409M1596 341V409M1597 335V409M1598 336V409M1599 340V409M1600 343V409M1601 329V409M1602 341V409M1603 343V409M1604 360V409M1605 356V409M1606 350V409M1607 351V409M1608 353V409M1609 341V409M1610 348V409M1611 365V409M1612 367V409M1613 361V409M1614 361V409M1615 374V409M1616 362V409M1617 365V409M1618 372V409M1619 372V409M1620 374V409M1621 369V409M1622 380V409M1623 381V409M1624 373V409M1625 377V409M1626 378V409M1627 375V409M1628 382V409M1629 388V409M1630 381V409M1631 383V409M1632 388V409M1633 385V409M1634 394V409M1635 398V409M1636 399V409M1637 399V409M1638 397V409M1639 395V409M1640 407V409M1641 398V409M1642 399V409M1643 401V409M1644 404V409M1645 403V409M1646 404V409M1647 403V409M1648 405V409M1649 406V409M1650 406V409M1651 406V409M1652 406V409M1653 406V409M1654 406V409M1655 406V409M1656 408V409M1657 408V409M1658 407V409M1659 408V409" stroke="#00ff00" stroke-width="1" fill="none" transform="translate(0.5 0)"/>
<path d="M1031 865.5H1910" stroke="#5096d3" stroke-width="1"/>
<path d="M1274 865V866M1275 865V866M1276 865V866M1277 865V866M1278 865V866M1279 865V866M1280 865V866M1281 865V866M1282 865V866M1283 865V866M1284 865V866M1285 865V866M1286 864V866M1287 865V866M1288 865V866M1289 865V866M1290 864V866M1291 865V866M1292 865V866M1293 865V866M1294 865V866M1295 865V866M1296 865V866M1297 865V866M1298 865V866M1299 865V866M1300 865V866M1301 865V866M1302 865V866M1303 865V866M1304 865V866M1305 865V866M1306 865V866M1307 865V866M1308 865V866M1309 865V866M1310 865V866M1311 865V866M1312 865V866M1313 865V866M1314 865V866M1315 865V866M1316 865V866M1317 865V866M1318 865V866M1319 865V866M1320 865V866M1321 865V866M1322 865V866M1323 865V866M1324 865V866M1325 865V866M1326 865V866M1327 865V866M1328 865V866M1329 865V866M1330 865V866M1331 864V866M1332 864V866M1333 864V866M1334 864V866M1335 865V866M1336 864V866M1337 864V866M1338 864V866M1339 864V866M1340 864V866M1341 864V866M1342 863V866M1343 862V866M1344 861V866M1345 857V866M1346 853V866M1347 851V866M1348 847V866M1349 838V866M1350 846V866M1351 840V866M1352 845V866M1353 842V866M1354 844V866M1355 846V866M1356 844V866M1357 839V866M1358 835V866M1359 825V866M1360 820V866M1361 806V866M1362 809V866M1363 800V866M1364 810V866M1365 803V866M1366 812V866M1367 825V866M1368 825V866M1369 841V866M1370 845V866M1371 839V866M1372 839V866M1373 828V866M1374 837V866M1375 824V866M1376 817V866M1377 804V866M1378 796V866M1379 795V866M1380 775V866M1381 759V866M1382 728V866M1383 753V866M1384 748V866M1385 751V866M1386 758V866M1387 759V866M1388 758V866M1389 746V866M1390 762V866M1391 769V866M1392 745V866M1393 734V866M1394 732V866M1395 734V866M1396 726V866M1397 749V866M1398 738V866M1399 747V866M1400 760V866M1401 755V866M1402 754V866M1403 754V866M1404 752V866M1405 759V866M1406 746V866M1407 761V866M1408 756V866M1409 739V866M1410 749V866M1411 748V866M1412 727V866M1413 754V866M1414 750V866M1415 754V866M1416 755V866M1417 760V866M1418 760V866M1419 761V866M1420 760V866M1421 773V866M1422 757V866M1423 758V866M1424 774V866M1425 783V866M1426 800V866M1427 806V866M1428 818V866M1429 827V866M1430 820V866M1431 829V866M1432 831V866M1433 832V866M1434 834V866M1435 825V866M1436 835V866M1437 835V866M1438 833V866M1439 836V866M1440 836V866M1441 838V866M1442 821V866M1443 819V866M1444 822V866M1445 809V866M1446 815V866M1447 801V866M1448 808V866M1449 826V866M1450 813V866M1451 810V866M1452 799V866M1453 787V866M1454 771V866M1455 735V866M1456 723V866M1457 711V866M1458 717V866M1459 712V866M1460 705V866M1461 713V866M1462 714V866M1463 716V866M1464 712V866M1465 696V866M1466 710V866M1467 693V866M1468 678V866M1469 662V866M1470 654V866M1471 616V866M1472 610V866M1473 592V866M1474 587V866M1475 588V866M1476 546V866M1477 567V866M1478 577V866M1479 589V866M1480 602V866M1481 630V866M1482 644V866M1483 642V866M1484 657V866M1485 673V866M1486 676V866M1487 684V866M1488 727V866M1489 724V866M1490 715V866M1491 724V866M1492 733V866M1493 719V866M1494 715V866M1495 710V866M1496 690V866M1497 717V866M1498 707V866M1499 709V866M1500 706V866M1501 707V866M1502 703V866M1503 699V866M1504 713V866M1505 704V866M1506 703V866M1507 724V866M1508 724V866M1509 738V866M1510 727V866M1511 709V866M1512 708V866M1513 707V866M1514 706V866M1515 715V866M1516 726V866M1517 713V866M1518 704V866M1519 696V866M1520 701V866M1521 699V866M1522 705V866M1523 717V866M1524 721V866M1525 718V866M1526 742V866M1527 751V866M1528 765V866M1529 771V866M1530 767V866M1531 773V866M1532 780V866M1533 781V866M1534 802V866M1535 807V866M1536 814V866M1537 799V866M1538 803V866M1539 800V866M1540 794V866M1541 795V866M1542 791V866M1543 791V866M1544 783V866M1545 794V866M1546 796V866M1547 786V866M1548 802V866M1549 799V866M1550 781V866M1551 765V866M1552 764V866M1553 757V866M1554 756V866M1555 739V866M1556 743V866M1557 743V866M1558 744V866M1559 755V866M1560 761V866M1561 778V866M1562 777V866M1563 778V866M1564 782V866M1565 791V866M1566 786V866M1567 788V866M1568 801V866M1569 797V866M1570 799V866M1571 802V866M1572 808V866M1573 802V866M1574 799V866M1575 802V866M1576 811V866M1577 805V866M1578 807V866M1579 809V866M1580 811V866M1581 820V866M1582 824V866M1583 830V866M1584 834V866M1585 841V866M1586 847V866M1587 852V866M1588 860V866M1589 858V866M1590 859V866M1591 860V866M1592 863V866M1593 865V866" stroke="#5096d3" stroke-width="1" fill="none" transform="translate(0.5 0)"/>
</svg>
<div class="yl" style="left:-4px;top:40px;color:#80ff00">3.822 ps</div>
<div class="yl" style="left:-4px;top:85px;color:#80ff00">2.822 ps</div>
<div class="yl" style="left:-4px;top:138px;color:#80ff00">1.822 ps</div>
<div class="yl" style="left:-4px;top:191px;color:#80ff00">822 fs</div>
<div class="yl" style="left:-4px;top:244px;color:#80ff00">-178 fs</div>
<div class="yl" style="left:-4px;top:297px;color:#80ff00">-1.177 ps</div>
<div class="yl" style="left:-4px;top:350px;color:#80ff00">-2.177 ps</div>
<div class="yl" style="left:-4px;top:403px;color:#80ff00">-3.177 ps</div>
<div class="yl" style="left:-4px;top:449px;color:#80ff00">-4.177 ps</div>
<div class="yl" style="left:956px;top:40px;color:#00ff00">252 #</div>
<div class="yl" style="left:956px;top:85px;color:#00ff00">216 #</div>
<div class="yl" style="left:956px;top:138px;color:#00ff00">180 #</div>
<div class="yl" style="left:956px;top:191px;color:#00ff00">144 #</div>
<div class="yl" style="left:956px;top:244px;color:#00ff00">108 #</div>
<div class="yl" style="left:956px;top:297px;color:#00ff00">72 #</div>
<div class="yl" style="left:956px;top:350px;color:#00ff00">36 #</div>
<div class="yl" style="left:956px;top:403px;color:#00ff00">0 #</div>
<div class="yl" style="left:956px;top:449px;color:#00ff00">-36 #</div>
<div class="yl" style="left:-4px;top:497px;color:#5096d3">3.962 ps</div>
<div class="yl" style="left:-4px;top:542px;color:#5096d3">2.962 ps</div>
<div class="yl" style="left:-4px;top:595px;color:#5096d3">1.962 ps</div>
<div class="yl" style="left:-4px;top:648px;color:#5096d3">962 fs</div>
<div class="yl" style="left:-4px;top:701px;color:#5096d3">-38 fs</div>
<div class="yl" style="left:-4px;top:754px;color:#5096d3">-1.037 ps</div>
<div class="yl" style="left:-4px;top:807px;color:#5096d3">-2.037 ps</div>
<div class="yl" style="left:-4px;top:860px;color:#5096d3">-3.037 ps</div>
<div class="yl" style="left:-4px;top:906px;color:#5096d3">-4.037 ps</div>
<div class="yl" style="left:956px;top:497px;color:#5096d3">378 #</div>
<div class="yl" style="left:956px;top:542px;color:#5096d3">324 #</div>
<div class="yl" style="left:956px;top:595px;color:#5096d3">270 #</div>
<div class="yl" style="left:956px;top:648px;color:#5096d3">216 #</div>
<div class="yl" style="left:956px;top:701px;color:#5096d3">162 #</div>
<div class="yl" style="left:956px;top:754px;color:#5096d3">108 #</div>
<div class="yl" style="left:956px;top:807px;color:#5096d3">54 #</div>
<div class="yl" style="left:956px;top:860px;color:#5096d3">0 #</div>
<div class="yl" style="left:956px;top:906px;color:#5096d3">-54 #</div>
<div class="a" style="left:70px;top:465px;font-size:12px;line-height:14px;color:#80ff00">-1 µs</div>
<div class="xl" style="left:118px;top:465px;color:#80ff00">-800 ns</div>
<div class="xl" style="left:206px;top:465px;color:#80ff00">-600 ns</div>
<div class="xl" style="left:294px;top:465px;color:#80ff00">-400 ns</div>
<div class="xl" style="left:382px;top:465px;color:#80ff00">-200 ns</div>
<div class="xl" style="left:470px;top:465px;color:#80ff00">0 ns</div>
<div class="xl" style="left:558px;top:465px;color:#80ff00">200 ns</div>
<div class="xl" style="left:646px;top:465px;color:#80ff00">400 ns</div>
<div class="xl" style="left:734px;top:465px;color:#80ff00">600 ns</div>
<div class="xl" style="left:822px;top:465px;color:#80ff00">800 ns</div>
<div class="a" style="left:870px;top:465px;font-size:12px;line-height:14px;color:#80ff00;width:80px;text-align:right">1 µs</div>
<div class="a" style="left:1030px;top:465px;font-size:12px;line-height:14px;color:#00ff00">-5 ps</div>
<div class="xl" style="left:1078px;top:465px;color:#00ff00">-4 ps</div>
<div class="xl" style="left:1166px;top:465px;color:#00ff00">-3 ps</div>
<div class="xl" style="left:1254px;top:465px;color:#00ff00">-2 ps</div>
<div class="xl" style="left:1342px;top:465px;color:#00ff00">-1 ps</div>
<div class="xl" style="left:1430px;top:465px;color:#00ff00">0 ps</div>
<div class="xl" style="left:1518px;top:465px;color:#00ff00">1 ps</div>
<div class="xl" style="left:1606px;top:465px;color:#00ff00">2 ps</div>
<div class="xl" style="left:1694px;top:465px;color:#00ff00">3 ps</div>
<div class="xl" style="left:1782px;top:465px;color:#00ff00">4 ps</div>
<div class="a" style="left:1830px;top:465px;font-size:12px;line-height:14px;color:#00ff00;width:80px;text-align:right">5 ps</div>
<div class="a" style="left:70px;top:922px;font-size:12px;line-height:14px;color:#5096d3">-1 µs</div>
<div class="xl" style="left:118px;top:922px;color:#5096d3">-800 ns</div>
<div class="xl" style="left:206px;top:922px;color:#5096d3">-600 ns</div>
<div class="xl" style="left:294px;top:922px;color:#5096d3">-400 ns</div>
<div class="xl" style="left:382px;top:922px;color:#5096d3">-200 ns</div>
<div class="xl" style="left:470px;top:922px;color:#5096d3">0 ns</div>
<div class="xl" style="left:558px;top:922px;color:#5096d3">200 ns</div>
<div class="xl" style="left:646px;top:922px;color:#5096d3">400 ns</div>
<div class="xl" style="left:734px;top:922px;color:#5096d3">600 ns</div>
<div class="xl" style="left:822px;top:922px;color:#5096d3">800 ns</div>
<div class="a" style="left:870px;top:922px;font-size:12px;line-height:14px;color:#5096d3;width:80px;text-align:right">1 µs</div>
<div class="a" style="left:1030px;top:922px;font-size:12px;line-height:14px;color:#5096d3">-5 ps</div>
<div class="xl" style="left:1078px;top:922px;color:#5096d3">-4 ps</div>
<div class="xl" style="left:1166px;top:922px;color:#5096d3">-3 ps</div>
<div class="xl" style="left:1254px;top:922px;color:#5096d3">-2 ps</div>
<div class="xl" style="left:1342px;top:922px;color:#5096d3">-1 ps</div>
<div class="xl" style="left:1430px;top:922px;color:#5096d3">0 ps</div>
<div class="xl" style="left:1518px;top:922px;color:#5096d3">1 ps</div>
<div class="xl" style="left:1606px;top:922px;color:#5096d3">2 ps</div>
<div class="xl" style="left:1694px;top:922px;color:#5096d3">3 ps</div>
<div class="xl" style="left:1782px;top:922px;color:#5096d3">4 ps</div>
<div class="a" style="left:1830px;top:922px;font-size:12px;line-height:14px;color:#5096d3;width:80px;text-align:right">5 ps</div>
<svg class="a" style="left:0;top:0" width="1920" height="1080"><path d="M510.5 462l4.5 8h-9z" fill="#80ff00"/><path d="M1470.5 462l4.5 8h-9z" fill="#00ff00"/><path d="M510.5 919l4.5 8h-9z" fill="#5096d3"/><path d="M1470.5 919l4.5 8h-9z" fill="#5096d3"/><path d="M60 240h10v2h-9v1h-1z" fill="#80ff00"/><path d="M1020 408h10v2h-9v1h-1z" fill="#00ff00"/><path d="M60 704h10v2h-9v1h-1z" fill="#5096d3"/><path d="M1020 864h10v2h-9v1h-1z" fill="#5096d3"/></svg>
<div class="mk" style="left:4px;top:228px;width:66px;background:#80ff00;font-size:9.6px">TIE Hist w/o filter</div>
<div class="mk" style="left:963px;top:396px;width:67px;background:#00ff00;font-size:9.4px">TIE Track w/o filter</div>
<div class="mk" style="left:15px;top:692px;width:55px;background:#5096d3">CETIETrack</div>
<div class="mk" style="left:982px;top:853px;width:48px;background:#5096d3;font-size:9.6px">CETIEHist</div>
<div class="box" style="left:4px;top:951px;width:97px;height:78px;">
<div class="hd" style="height:31px;background:#00ff00">M6<br>TIE Track w/...</div>
<div class="bd" style="top:31px;background:#434343">36.0 #/<br>1.00 ps/<br>28.998 k#</div>
</div>
<div class="box" style="left:104px;top:951px;width:97px;height:78px;">
<div class="hd" style="height:31px;background:#80ff00">M7<br>TIE Hist w/o f...</div>
<div class="bd" style="top:31px;background:#434343">1.00 ps/<br>200 ns/</div>
</div>
<div class="box" style="left:204px;top:951px;width:97px;height:78px;">
<div class="hd" style="height:31px;background:#5096d3">CETIETrack</div>
<div class="bd" style="top:31px;background:#434343">1.00 ps/<br>200 ns/</div>
</div>
<div class="a" style="left:303px;top:950px;width:99px;height:80px;border:2px solid #2e8de8;background:#2c4a66"></div>
<div class="box" style="left:305px;top:951px;width:95px;height:78px;top:951px;height:77px">
<div class="hd" style="height:31px;background:#5096d3">CETIEHist</div>
<div class="bd" style="top:31px;background:#2c4a66">54 #/<br>1.00 ps/<br>28.977 k#</div>
</div>
<div class="a" style="left:404px;top:951px;width:97px;height:78px;border:1px dashed #e0e0e0"></div>
<div class="a" style="left:443px;top:989px;width:16px;height:2px;background:#fff"></div>
<div class="a" style="left:450px;top:982px;width:2px;height:16px;background:#fff"></div>
<div class="a" style="left:1603px;top:951px;width:97px;height:48px;background:#444"></div>
<div class="a" style="left:1603px;top:951px;width:97px;height:16px;background:#c4c4c4"></div>
<div class="a" style="left:1606px;top:951px;font-size:13px;line-height:16px;color:#000">Clock</div>
<div class="a" style="left:1606px;top:967px;font-size:13px;line-height:16px;color:#fff">16.00 GHz</div>
<div class="a" style="left:1703px;top:951px;width:112px;height:48px;background:#444"></div>
<div class="a" style="left:1703px;top:951px;width:112px;height:16px;background:#fafafa"></div>
<div class="a" style="left:1706px;top:951px;font-size:13px;line-height:16px;color:#000">Timebase</div>
<div class="a" style="left:1715px;top:951px;width:98px;text-align:right;font-size:13px;line-height:16px;color:#000">0 ns</div>
<div class="a" style="left:1715px;top:969px;width:98px;text-align:right;font-size:13px;line-height:16px;color:#fff">200 ns/div</div>
<div class="a" style="left:1706px;top:984px;font-size:13px;line-height:16px;color:#fff">160 kS</div>
<div class="a" style="left:1715px;top:984px;width:98px;text-align:right;font-size:13px;line-height:16px;color:#fff">80 GS/s</div>
<div class="a" style="left:1818px;top:951px;width:97px;height:48px;background:#444"></div>
<div class="a" style="left:1818px;top:951px;width:97px;height:16px;background:#fafafa"></div>
<div class="a" style="left:1821px;top:951px;font-size:13px;line-height:16px;color:#000">Trigger</div>
<div class="a" style="left:1880px;top:952px;width:16px;height:14px;background:#3c3c3c;border-radius:3px"></div>
<div class="a" style="left:1898px;top:952px;width:16px;height:14px;background:#3c3c3c;border-radius:3px"></div>
<div class="a" style="left:1880px;top:952px;width:16px;text-align:center;font-size:10px;line-height:14px;color:#e8e8e8">C2</div>
<div class="a" style="left:1898px;top:952px;width:16px;text-align:center;font-size:10px;line-height:14px;color:#e8e8e8;letter-spacing:-0.3px">DC</div>
<div class="a" style="left:1821px;top:969px;font-size:13px;line-height:16px;color:#fff">Stop</div>
<div class="a" style="left:1815px;top:969px;width:98px;text-align:right;font-size:13px;line-height:16px;color:#fff">0.0 mV</div>
<div class="a" style="left:1821px;top:984px;font-size:13px;line-height:16px;color:#fff">Edge</div>
<div class="a" style="left:1815px;top:984px;width:98px;text-align:right;font-size:13px;line-height:16px;color:#fff">Positive</div>
<div class="a" style="left:0;top:1030px;width:1911px;height:32px;background:#00001a;border:1px solid #6a6a6a"></div>
<div class="a" style="left:3px;top:1032px;font-size:13px;line-height:15px;font-weight:bold;color:#fff">Separation</div>
<div class="a" style="left:3px;top:1048px;font-size:13px;line-height:15px;color:#fff">mean</div>
<div class="a" style="left:153px;top:1032px;width:140px;text-align:right;font-size:13px;line-height:15px;color:#fff">Ti(1e-12)</div>
<div class="a" style="left:153px;top:1048px;width:140px;text-align:right;font-size:13px;line-height:15px;color:#fff">3.8924 ps</div>
<div class="a" style="left:300px;top:1032px;width:140px;text-align:right;font-size:13px;line-height:15px;color:#fff">Ri(sp)</div>
<div class="a" style="left:300px;top:1048px;width:140px;text-align:right;font-size:13px;line-height:15px;color:#fff">95.1 fs</div>
<div class="a" style="left:447px;top:1032px;width:140px;text-align:right;font-size:13px;line-height:15px;color:#fff">Dj(sp)</div>
<div class="a" style="left:447px;top:1048px;width:140px;text-align:right;font-size:13px;line-height:15px;color:#fff">2.5364 ps</div>
<div class="a" style="left:594px;top:1032px;width:140px;text-align:right;font-size:13px;line-height:15px;color:#fff">ClkFreq</div>
<div class="a" style="left:594px;top:1048px;width:140px;text-align:right;font-size:13px;line-height:15px;color:#fff">15.99959 GHz</div>
<div class="a" style="left:0;top:1063px;width:1920px;height:17px;background:#262626;border-top:1px solid #6a6a6a"></div>
<div class="a" style="left:6px;top:1065px;font-size:13px;line-height:16px;color:#fff;font-weight:bold;letter-spacing:-0.3px">TELEDYNE</div>
<div class="a" style="left:77px;top:1065px;font-size:13px;line-height:16px;color:#c8c8c8;letter-spacing:-0.9px">LECROY</div>
<div class="a" style="left:128px;top:1065px;font-size:13px;line-height:16px;color:#ddd">|</div>
<div class="a" style="left:134px;top:1065px;font-size:13px;line-height:16px;color:#4fc64f;font-weight:bold">HD</div>
<div class="a" style="left:159px;top:1065px;font-size:13px;line-height:16px;color:#fff">12 bits</div>
<div class="a" style="left:880px;top:1070px;width:160px;height:4px;background:#d4d4d4"></div>
</body></html>
